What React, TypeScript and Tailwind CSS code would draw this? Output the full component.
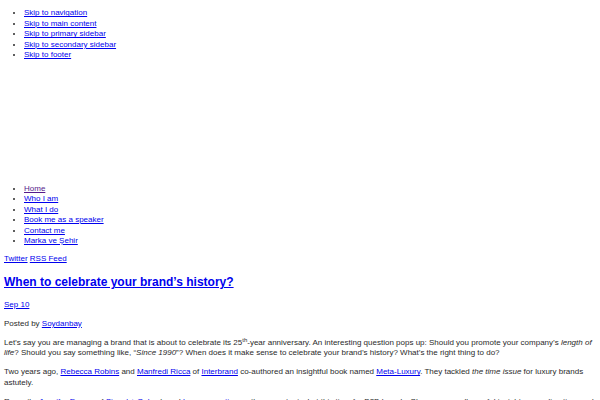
import React from "react";

const A = ({ children, visited = false }: { children: React.ReactNode; visited?: boolean }) => (
  <a href="#" className={visited ? "text-[#551a8b] underline" : "text-[#0000ee] underline"}>
    {children}
  </a>
);

export default function App() {
  return (
    <div className="bg-white w-[600px] h-[400px] overflow-hidden px-[4px] text-[8px] leading-[10.5px] text-[#2a2a2a]" style={{ fontFamily: '"Liberation Sans", Arial, sans-serif' }}>
      <ul className="list-disc pl-[20px] pt-[8.25px]">
        <li><A>Skip to navigation</A></li>
        <li><A>Skip to main content</A></li>
        <li><A>Skip to primary sidebar</A></li>
        <li><A>Skip to secondary sidebar</A></li>
        <li><A>Skip to footer</A></li>
      </ul>
      <div className="h-[122.75px]" />
      <ul className="list-disc pl-[20px]">
        <li><A visited>Home</A></li>
        <li><A>Who I am</A></li>
        <li><A>What I do</A></li>
        <li><A>Book me as a speaker</A></li>
        <li><A>Contact me</A></li>
        <li><A>Marka ve Şehir</A></li>
      </ul>
      <div className="mt-[7.5px]">
        <A>Twitter</A> <A>RSS Feed</A>
      </div>
      <h2 className="mt-[10.5px] text-[12px] leading-[14px] font-bold">
        <A>When to celebrate your brand’s history?</A>
      </h2>
      <div className="mt-[10.75px]"><A>Sep 10</A></div>
      <p className="mt-[8.5px]">Posted by <A>Soydanbay</A></p>
      <p className="mt-[8.5px]">
        Let’s say you are managing a brand that is about to celebrate its 25<sup className="text-[6px]">th</sup>-year anniversary. An interesting question pops up: Should you promote your company’s <em>length of life</em>? Should you say something like, “<em>Since 1990</em>”? When does it make sense to celebrate your brand’s history? What’s the right thing to do?
      </p>
      <p className="mt-[8.5px]">
        Two years ago, <A>Rebecca Robins</A> and <A>Manfredi Ricca</A> of <A>Interbrand</A> co-authored an insightful book named <A>Meta-Luxury</A>. They tackled <em>the time issue</em> for luxury brands astutely.
      </p>
      <p className="mt-[8.5px]">
        Recently, <A>Jennifer Ezzara</A> of <A>Siegel + Gale</A> shared <A>her perspective</A> on the same topic, but this time for B2B brands. She gave equally useful insights regarding time and brands.
      </p>
    </div>
  );
}
